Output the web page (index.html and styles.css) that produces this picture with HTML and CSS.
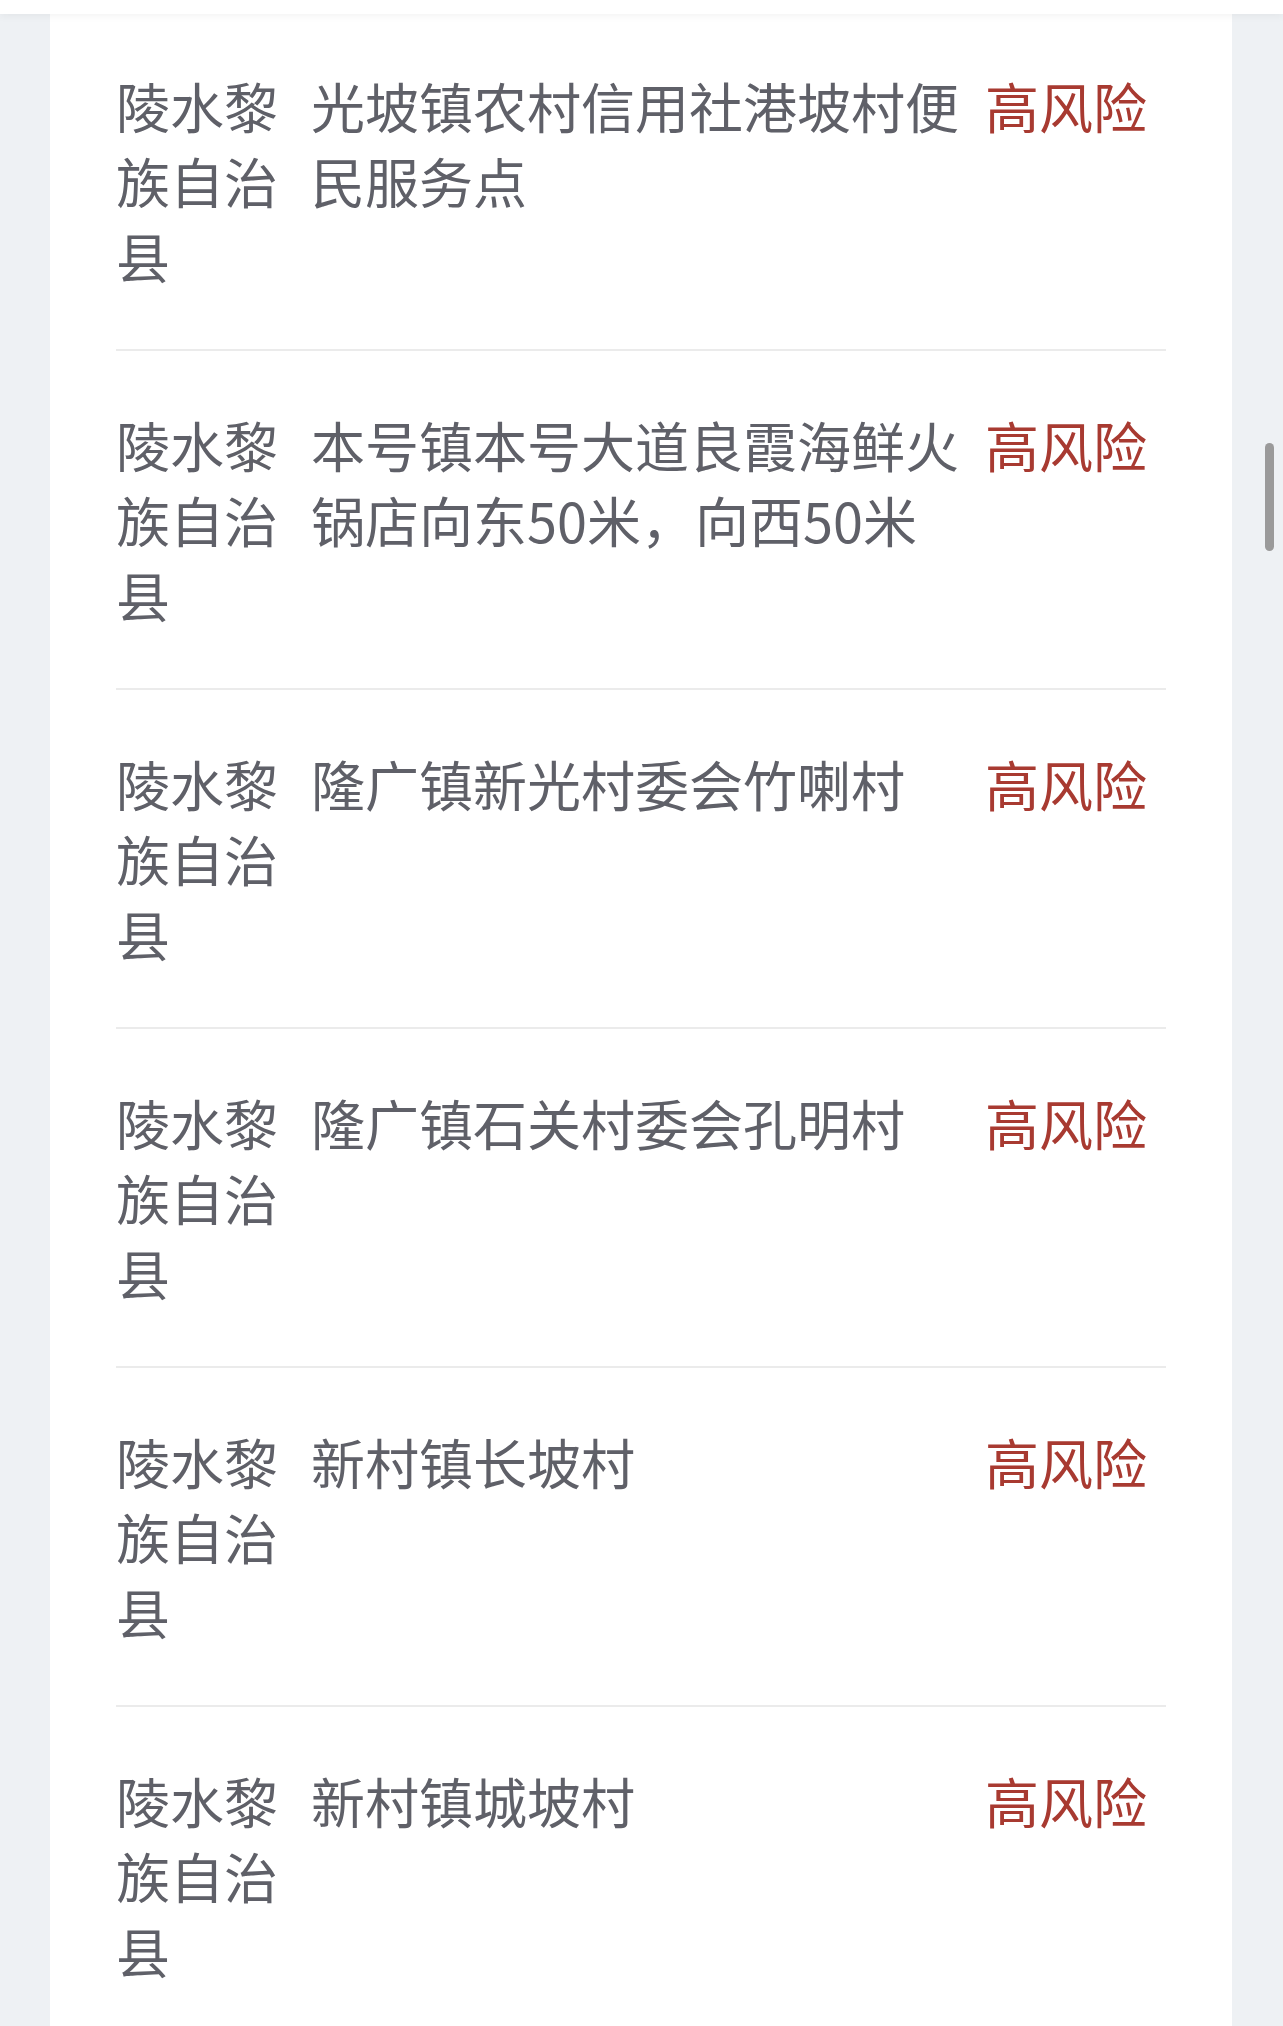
FILE: index.html
```html
<!DOCTYPE html>
<html lang="zh-CN">
<head>
<meta charset="utf-8">
<title>风险地区列表</title>
<link rel="stylesheet" href="styles.css">
</head>
<body>
<div class="topbar"></div>
<main class="page">
  <section class="card">
    <div class="list">
      <div class="row">
        <div class="cell area">陵水黎族自治县</div>
        <div class="cell place">光坡镇农村信用社港坡村便民服务点</div>
        <div class="cell level">高风险</div>
      </div>
      <div class="row">
        <div class="cell area">陵水黎族自治县</div>
        <div class="cell place">本号镇本号大道良霞海鲜火锅店向东50米，向西50米</div>
        <div class="cell level">高风险</div>
      </div>
      <div class="row">
        <div class="cell area">陵水黎族自治县</div>
        <div class="cell place">隆广镇新光村委会竹喇村</div>
        <div class="cell level">高风险</div>
      </div>
      <div class="row">
        <div class="cell area">陵水黎族自治县</div>
        <div class="cell place">隆广镇石关村委会孔明村</div>
        <div class="cell level">高风险</div>
      </div>
      <div class="row">
        <div class="cell area">陵水黎族自治县</div>
        <div class="cell place">新村镇长坡村</div>
        <div class="cell level">高风险</div>
      </div>
      <div class="row">
        <div class="cell area">陵水黎族自治县</div>
        <div class="cell place">新村镇城坡村</div>
        <div class="cell level">高风险</div>
      </div>
    </div>
  </section>
</main>
<div class="scroll-thumb"></div>
</body>
</html>
```
FILE: styles.css
```css
html, body {
  margin: 0;
  padding: 0;
}
body {
  background: #eef1f4;
  font-family: "Noto Sans CJK SC", "Noto Sans", sans-serif;
  height: 2026px;
  overflow: hidden;
}
.topbar {
  position: fixed;
  top: 0;
  left: 0;
  right: 0;
  height: 14px;
  background: #ffffff;
  box-shadow: 0 2px 8px rgba(0, 0, 0, 0.05);
  z-index: 5;
}
.page {
  padding: 0 51px 0 50px;
}
.card {
  background: #ffffff;
  padding: 12px 66px 0 66px;
  min-height: 2100px;
}
.row {
  display: grid;
  grid-template-columns: 195px 674px 1fr;
  padding: 56px 0 56px 0;
  border-bottom: 2px solid #ebebeb;
}
.cell {
  font-size: 54px;
  line-height: 75px;
  color: #5f6068;
  word-break: break-all;
}
.area {
  padding-right: 20px;
}
.place {
  padding-right: 10px;
}
.level {
  color: #a83a31;
}
.scroll-thumb {
  position: fixed;
  left: 1265px;
  top: 443px;
  width: 9px;
  height: 108px;
  border-radius: 5px;
  background: #9a9a9a;
  z-index: 6;
}
```
